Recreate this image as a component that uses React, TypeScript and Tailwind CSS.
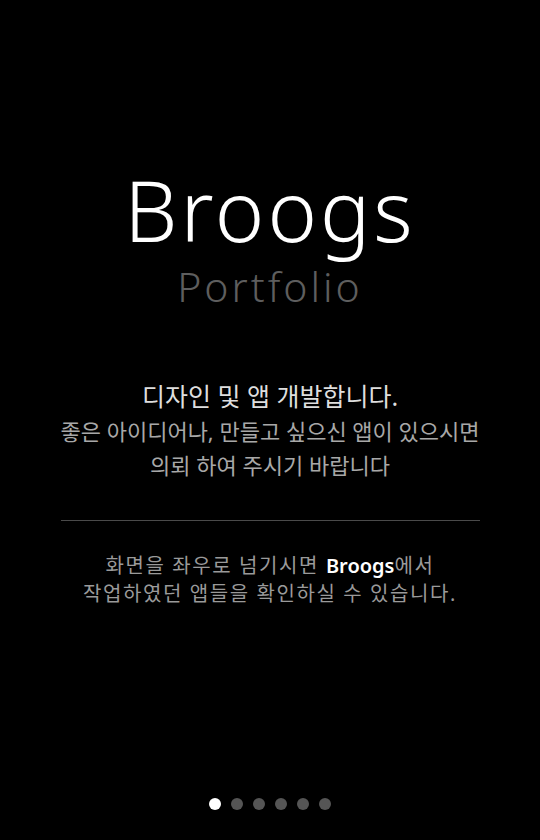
export default function App() {
  const dots = [0, 1, 2, 3, 4, 5];
  return (
    <div
      className="flex h-[840px] w-[540px] flex-col items-center bg-black text-center"
      style={{ fontFamily: '"Noto Sans", "Noto Sans CJK KR", sans-serif' }}
    >
      <div className="mt-[160px] flex flex-col items-center">
        <h1 className="text-[84px] font-light leading-[100px] tracking-[3px] text-white">Broogs</h1>
        <p className="mt-[2px] text-[41px] font-light leading-[48px] tracking-[3px] text-[#5e5e5e]">Portfolio</p>
      </div>

      <div className="mt-[68px] flex flex-col items-center">
        <p className="text-[25px] leading-[36px] text-[#dedede]">디자인 및 앱 개발합니다.</p>
        <p className="text-[22px] leading-[34px] text-[#a8a8a8]">
          좋은 아이디어나, 만들고 싶으신 앱이 있으시면
          <br />
          의뢰 하여 주시기 바랍니다
        </p>
      </div>

      <div className="mt-[38px] h-px w-[419px] bg-[#4a4a4a]" />

      <p className="mt-[31px] text-[20px] leading-[28px] tracking-[1.6px] text-[#9a9a9a]">
        화면을 좌우로 넘기시면 <span className="font-semibold tracking-normal text-white">Broogs</span>에서
        <br />
        작업하였던 앱들을 확인하실 수 있습니다.
      </p>

      <div className="mt-auto mb-[30px] flex gap-[10px]">
        {dots.map(i => (
          <span key={i} className={`h-3 w-3 rounded-full ${i === 0 ? "bg-white" : "bg-[#555]"}`} />
        ))}
      </div>
    </div>
  );
}
